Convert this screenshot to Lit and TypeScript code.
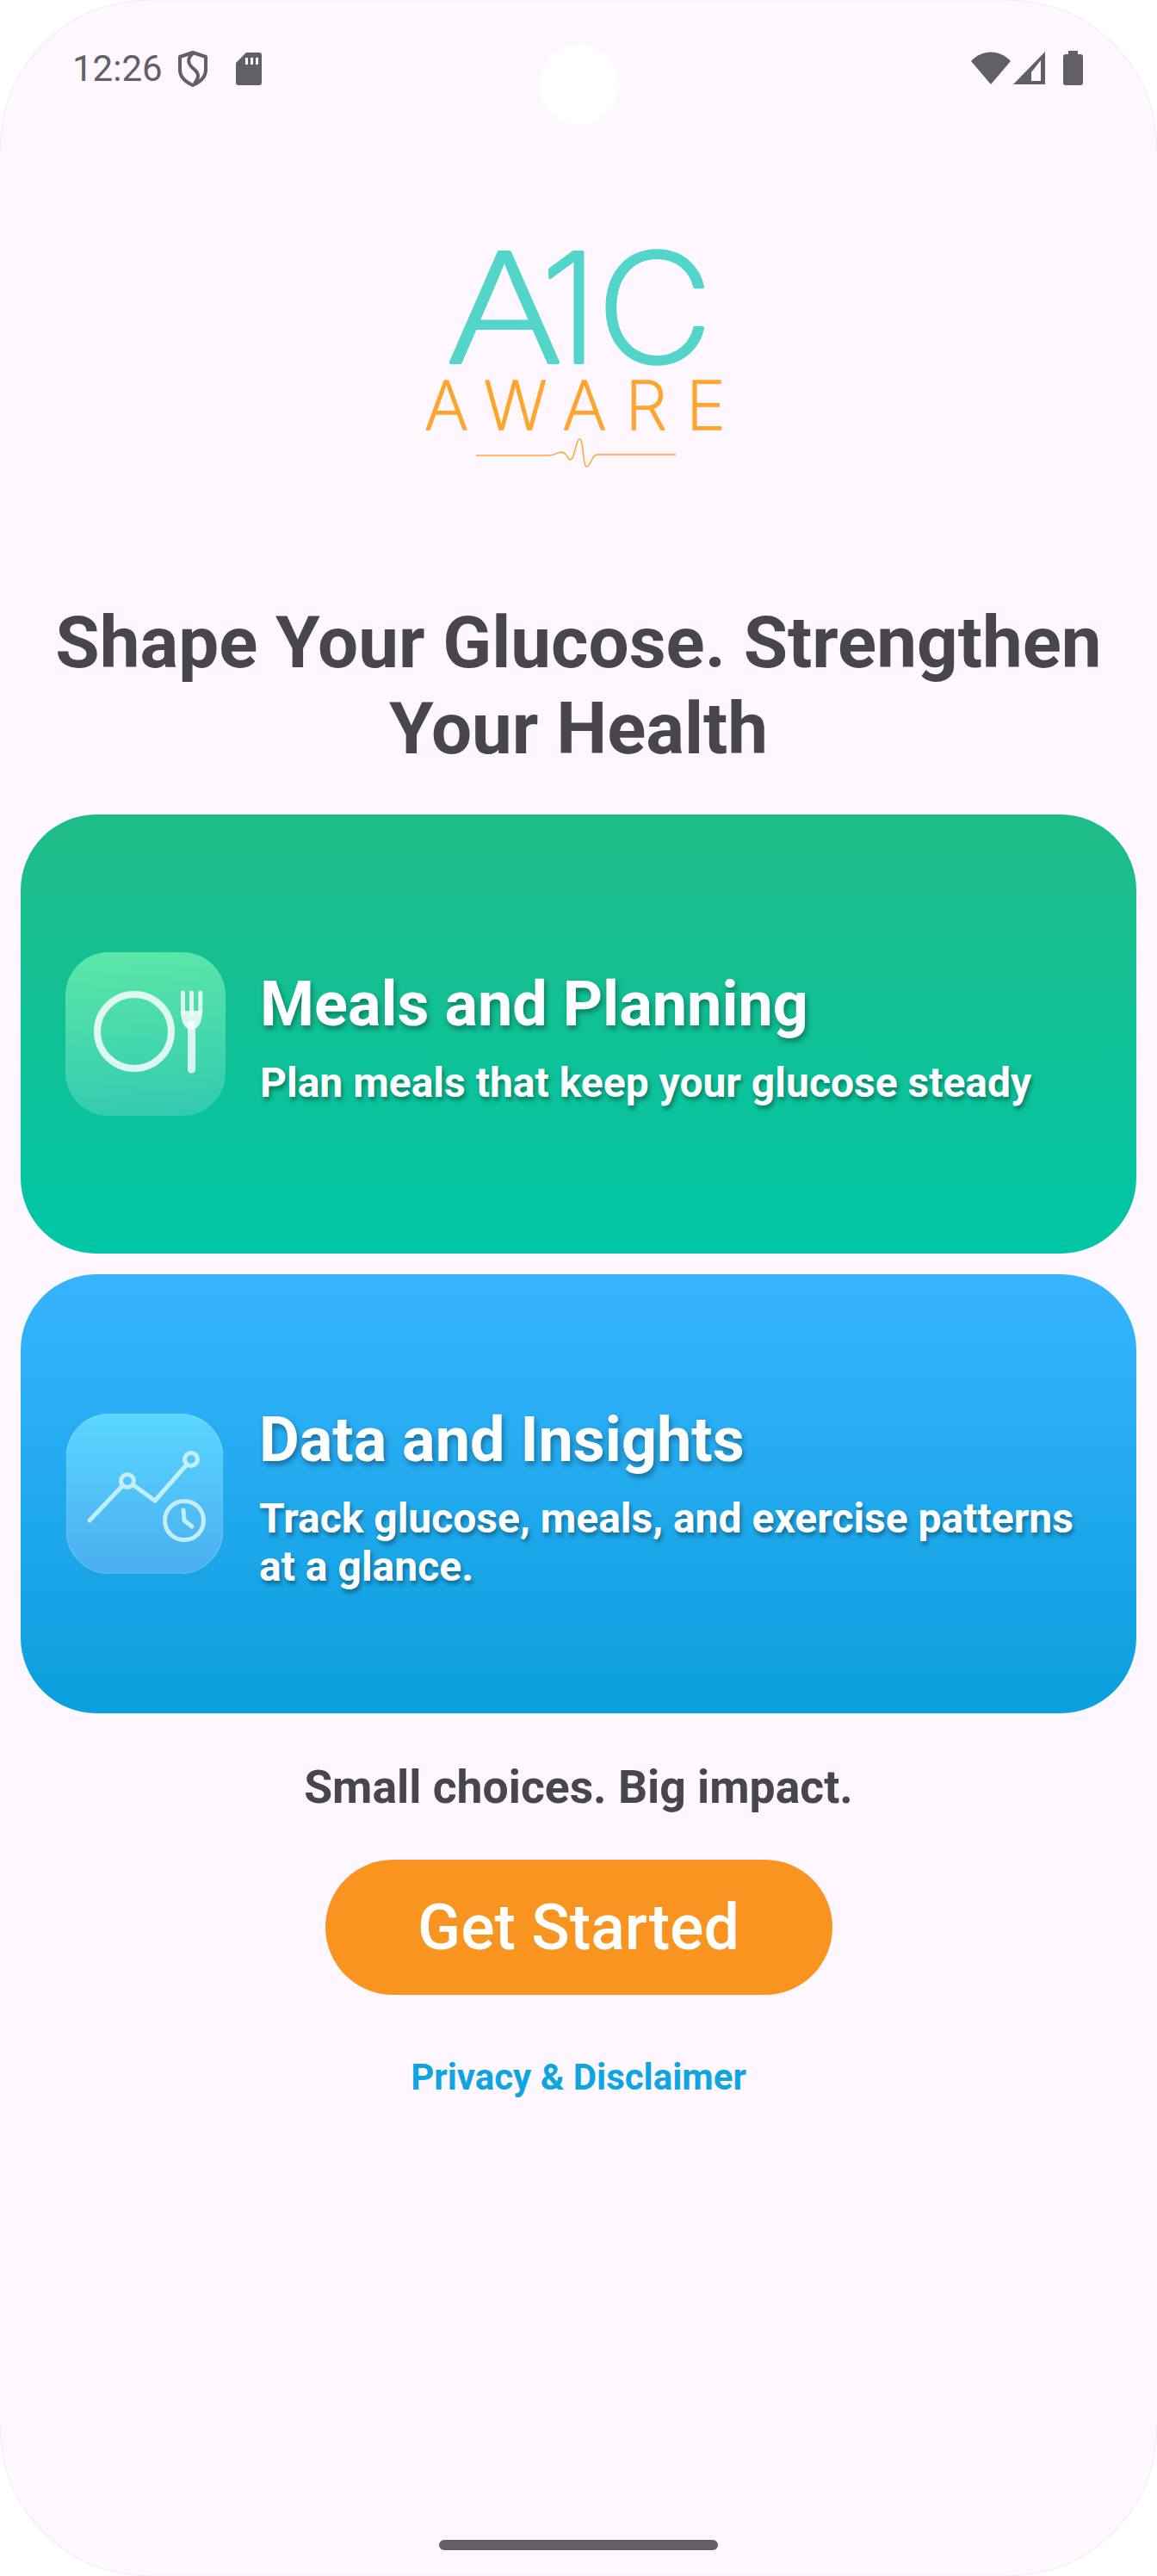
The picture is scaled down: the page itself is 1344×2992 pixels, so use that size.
import { LitElement, html, css, svg } from "lit";
import { customElement } from "lit/decorators.js";

const mealIcon = svg`
  <circle cx="80" cy="92" r="43" fill="none" stroke="rgba(255,255,255,.82)" stroke-width="8"/>
  <g stroke="rgba(255,255,255,.8)" fill="none" stroke-linecap="round">
    <path d="M136.500 47V70M146.500 47V70M156.800 47V70" stroke-width="5"/>
    <path d="M146.500 84V136" stroke-width="9"/>
  </g>
  <path d="M134 68H159C159 82 154 90 146.500 90C139 90 134 82 134 68Z" fill="rgba(255,255,255,.8)"/>`;

const dataIcon = svg`
  <g fill="none" stroke="#c2eeff" stroke-width="5" stroke-linecap="round" stroke-linejoin="round">
    <path d="M27 124L65 84"/>
    <circle cx="71" cy="78" r="7.500"/>
    <path d="M78 83L103 101L140 59"/>
    <circle cx="145" cy="53" r="7.500"/>
    <circle cx="137" cy="124" r="22.500"/>
    <path d="M136 112L137 124L146 131"/>
  </g>`;

@customElement("app-root")
export class AppRoot extends LitElement {
  static styles = css`
    :host { display: block; background: #fff; font-family: Roboto, "Liberation Sans", sans-serif; }
    .screen {
      position: relative; height: 2992px; box-sizing: border-box; overflow: hidden;
      background: #fef7ff; border-radius: 172px;
      display: flex; flex-direction: column; align-items: center;
      box-shadow: inset 0 0 1px rgba(60,60,60,.3);
    }
    .status { align-self: stretch; height: 100px; box-sizing: border-box; padding: 59px 86px 0 84px; display: flex; align-items: flex-start; color: #625f65; }
    .time { font-size: 42px; line-height: 41px; width: 123px; }
    .status svg { display: block; flex: none; fill: #625f65; }
    .spacer { flex: 1; }
    .notch { position: absolute; left: 626px; top: 52px; width: 93px; height: 93px; border-radius: 50%; background: #fff; }
    .logo { display: block; margin-top: 141px; flex: none; }
    h1 { margin: 146px 0 0; width: 1300px; text-align: center; font-size: 83.500px; line-height: 100px; font-weight: 700; color: #49454f; }
    .card {
      align-self: stretch; margin: 0 24px; height: 510px; border-radius: 88px; box-sizing: border-box; flex: none;
      display: flex; align-items: center; padding-left: 52px; color: #fff;
    }
    .meals { margin-top: 49px; background: linear-gradient(180deg, #1fbc87, #00c6a6); }
    .data { margin-top: 24px; background: linear-gradient(180deg, #38b4ff, #0a9fdd); padding-left: 53px; }
    .tile { flex: none; width: 186px; height: 190px; border-radius: 50px; margin-right: 40px; }
    .meals .tile { background: linear-gradient(175deg, #5de7a8, #31cab1); }
    .data .tile { width: 182px; height: 186px; margin-right: 42px; background: linear-gradient(180deg, #5ad6ff, #4aaeef); box-shadow: inset 0 0 1px #fff; }
    .tile svg { display: block; }
    h2 { margin: 0 0 22px; font-size: 72px; line-height: 82px; font-weight: 700; text-shadow: 2px 4px 6px rgba(0,0,0,.36); }
    .copy p { margin: 0; text-shadow: 2px 4px 5px rgba(0,0,0,.36); font-size: 48px; line-height: 56px; font-weight: 700; }
    .copy { width: 960px; margin-top: 10px; }
    .tag { margin: 54px 0 0; color: #49454f; font-size: 53.500px; line-height: 64px; font-weight: 700; }
    .btn {
      margin-top: 52px; width: 589px; height: 157px; border: 0; border-radius: 79px; flex: none;
      background: #f99420; color: #fff; font: 500 73.500px Roboto, sans-serif;
    }
    .link { margin-top: 70px; color: #0ea5e0; font-size: 42px; line-height: 52px; font-weight: 700; }
    .home { position: absolute; left: 510px; top: 2950px; width: 324px; height: 12px; border-radius: 6px; background: #625f65; }
    .a1c { font-family: Inter, Roboto, sans-serif; font-weight: 200; fill: #53d5c9; stroke: #53d5c9; stroke-width: 4; stroke-linejoin: round; font-size: 176px; }
    .aware { font-family: Inter, Roboto, sans-serif; font-weight: 200; fill: #ffa52d; stroke: #ffa52d; stroke-width: 1.500; stroke-linejoin: round; font-size: 78px; }
  `;

  render() {
    return html`
      <div class="screen">
        <div class="status">
          <span class="time">12:26</span>
          <svg width="34" height="42" viewBox="0 0 34 42">
            <path d="M17 2L32 7V22C32 30 26 36 17 40C8 36 2 30 2 22V7Z" fill="none" stroke="#625f65" stroke-width="4" stroke-linejoin="round"/>
            <path d="M17 3C9 10 12 16 18 21C24 26 25 30 19 38" fill="none" stroke="#625f65" stroke-width="4"/>
          </svg>
          <svg width="30" height="38" viewBox="0 0 30 38" style="margin:2px 0 0 33px">
            <path fill-rule="evenodd" d="M12 0H27Q30 0 30 3V35Q30 38 27 38H3Q0 38 0 35V12ZM11 6V14H14V6ZM17 6V14H20V6ZM23 6V14H26V6Z"/>
          </svg>
          <span class="spacer"></span>
          <svg width="46" height="38" viewBox="0 0 46 38" style="margin:1px 3px 0 0">
            <path d="M0 11C13 -3 33 -3 46 11L23 38Z"/>
          </svg>
          <svg width="37" height="38" viewBox="0 0 37 38" style="margin:1px 21px 0 0">
            <path fill-rule="evenodd" d="M37 0V38H0ZM32 10L21 24V34H32Z"/>
          </svg>
          <svg width="23" height="40" viewBox="0 0 23 40">
            <path d="M6 0H17V4H20Q23 4 23 7V37Q23 40 20 40H3Q0 40 0 37V7Q0 4 3 4H6Z"/>
          </svg>
        </div>
        <div class="notch"></div>
        <svg class="logo" width="370" height="310" viewBox="490 240 370 310">
          <text class="a1c" x="521" y="420" textLength="136" lengthAdjust="spacingAndGlyphs">A</text>
          <text class="a1c" x="631" y="420">1</text>
          <text class="a1c" x="696" y="420" textLength="135" lengthAdjust="spacingAndGlyphs">C</text>
          <text class="aware" x="496" y="498" textLength="350">AWARE</text>
          <path d="M556 528H640C650 528 652 522 658 525C664 528 662 535 667 532C671 529 672 510 676 509C681 508 680 540 684 541C689 542 690 527 697 527H788" fill="none" stroke="#ffa52d" stroke-width="1.500"/>
        </svg>
        <h1>Shape Your Glucose. Strengthen Your Health</h1>
        <div class="card meals">
          <div class="tile"><svg width="186" height="190" viewBox="0 0 186 190">${mealIcon}</svg></div>
          <div class="copy">
            <h2>Meals and Planning</h2>
            <p>Plan meals that keep your glucose steady</p>
          </div>
        </div>
        <div class="card data">
          <div class="tile"><svg width="182" height="186" viewBox="0 0 182 186">${dataIcon}</svg></div>
          <div class="copy">
            <h2>Data and Insights</h2>
            <p>Track glucose, meals, and exercise patterns at a glance.</p>
          </div>
        </div>
        <p class="tag">Small choices. Big impact.</p>
        <button class="btn">Get Started</button>
        <span class="link">Privacy &amp; Disclaimer</span>
        <div class="home"></div>
      </div>
    `;
  }
}
